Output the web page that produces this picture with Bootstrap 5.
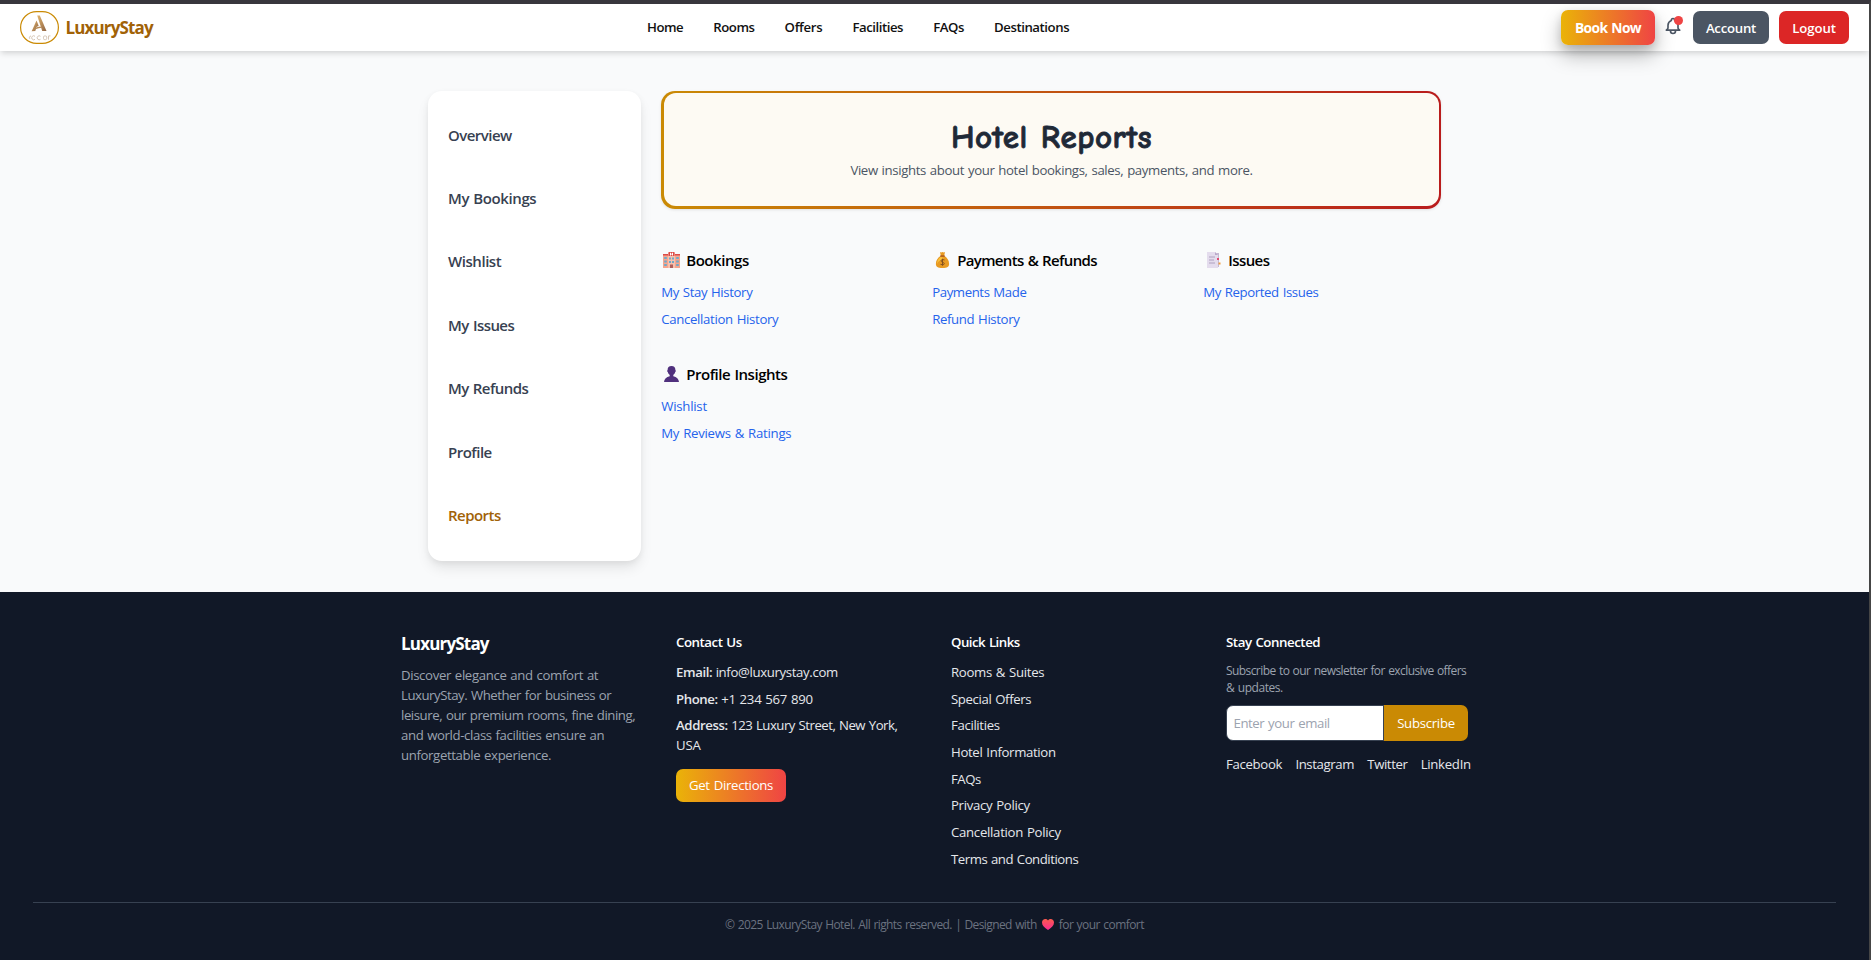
<!DOCTYPE html>
<html lang="en">
<head>
<meta charset="utf-8">
<meta name="viewport" content="width=device-width, initial-scale=1">
<title>LuxuryStay - Hotel Reports</title>
<link rel="stylesheet" href="https://cdn.jsdelivr.net/npm/bootstrap@5.3.0/dist/css/bootstrap.min.css">
<style>
body{font-family:"Segoe UI","Open Sans","Noto Sans",sans-serif;font-size:13.2px;line-height:20px;background:#f9fafb;color:#000;height:960px;overflow:hidden;border-top:4px solid #38363d;border-right:2px solid #454545}
a{text-decoration:none;color:inherit}
[data-w]{white-space:nowrap;word-spacing:.8px}
.topbar{height:47px;background:#fff;box-shadow:0 3px 6px -1px rgba(0,0,0,.17);padding:0 20px;position:relative;z-index:2}
.brandname{font-size:17px;font-weight:700;color:#a16207;margin-left:6.5px}
.menu{font-weight:600;color:#111;position:absolute;left:647px;top:13px}
.menu a{margin-right:30.1px}
.pill{border-radius:7px;font-weight:600;color:#fff;height:33px;display:flex;align-items:center;justify-content:center}
.grad{background:linear-gradient(90deg,#eab308,#ef4444)}
.book{width:94px;height:35px;font-weight:700;box-shadow:0 10px 20px rgba(0,0,0,.28),0 3px 8px rgba(0,0,0,.12);font-size:13.8px}
.bell{width:18px;height:21px;margin:0 10px;position:relative}
.bell svg{position:absolute;left:-2px;top:-1px}
.dot{position:absolute;left:9px;top:-1px;width:9px;height:9px;border-radius:50%;background:#ef4444}
.acct{width:76px;background:#4b5563;margin-right:10px}
.out{width:70px;background:#dc2626}
main{height:541px;padding:40px 0 0 428px;display:flex;gap:20px}
.side{width:213px;height:470px;background:#fff;border-radius:14px;padding:12px 20px;box-shadow:0 8px 14px -2px rgba(0,0,0,.1),0 2px 6px rgba(0,0,0,.05)}
.side a{display:flex;align-items:center;height:63.4px;font-size:15px;font-weight:600;color:#374151}
.side a.on{color:#a16207}
.banner{width:780px;height:118px;border-radius:14px;background:linear-gradient(90deg,#ca8a04,#b91c1c);padding:2px 2px 3px 3px;box-shadow:0 1px 3px rgba(0,0,0,.1)}
.banner>div{height:100%;border-radius:12px;background:#fdfaf3;text-align:center;padding-top:24px}
h1{font-family:"Comic Sans MS","Comic Neue",Lato,sans-serif;font-weight:700;font-size:33px;line-height:40px;margin:0;color:#1f2937;-webkit-text-stroke:.8px #1f2937}
.sub{color:#4b5563;margin-top:3px}
.cards{display:grid;grid-template-columns:repeat(3,238px);column-gap:33px;row-gap:26.4px;margin:39px 0 0 .2px}
.cards h2{font-size:15px;line-height:24px;font-weight:600;margin:0 0 10.100px;display:flex;align-items:center}
.cards h2 svg{width:17px;height:16px;margin:0 6px 0 2px}
ul{list-style:none;margin:0;padding:0}
li{margin-bottom:6.7px}
.cards li{color:#2563eb}
footer{background:#111827;height:368px;padding:40px 33px 0;color:#e5e7eb}
.fcols{display:grid;grid-template-columns:repeat(4,243px);column-gap:32px;width:1067px;margin:0 auto;height:270px}
.fcols h3{font-size:13.3px;line-height:20px;font-weight:600;color:#fff;margin:0 0 10px}
.fcols h3.big{font-size:17px;line-height:24px;font-weight:700;margin:0 0 9px}
.fcols b{font-weight:600}
.mut{color:#9ca3af}
.small-copy{font-size:12px;line-height:17px}
.copy{border-top:1px solid #374151;color:#6b7280;text-align:center;padding-top:13px}
.copy svg{width:12px;height:11px;margin:0 5px;vertical-align:-1px}
.directions{width:110px;margin-top:13.5px;font-weight:400}
.inp{width:158px;height:36px;background:#fff;border:1px solid #374151;border-radius:7px 0 0 7px;color:#9ca3af;padding:7px 6.5px}
.subb{width:84px;height:36px;background:#ca8a04;border-radius:0 7px 7px 0;color:#fff;display:flex;align-items:center;justify-content:center}
.signup{margin:9px 0 13px}
.social{gap:13.2px}
</style>
</head>
<body>
<header class="topbar d-flex align-items-center">
<svg width="39" height="33" viewBox="0 0 39 33">
<defs><linearGradient id="gold" x1="0" x2="1" y1="0" y2="1"><stop offset="0" stop-color="#e2b56c"/><stop offset="1" stop-color="#8f6444"/></linearGradient></defs>
<rect x=".6" y=".6" width="37.8" height="31.8" rx="16" fill="#fff" stroke="#ca8a04" stroke-width="1.2"/>
<path d="M17.2 4.500h2.600L26.500 20h-4.300z" fill="url(#gold)"/><path d="M16.500 9.500l2.200 5.300-2.200 1.300-1.200 3.900-3.600.3z" fill="url(#gold)"/><path d="M11.500 20.300c2-2.800 5-4.500 9-4.800l1 1.300c-4 .3-7 1.600-10 3.500z" fill="#b58a58"/>
<g fill="none" stroke="#d6c6b6" stroke-width="1"><path d="M15 25.300a2 2 0 1 0 0 3M28.500 28.700v-3.800h2M11 25a1.600 1.600 0 0 0-.8 3"/><path d="M20.500 25.300a2 2 0 1 0 0 3"/><rect x="23.500" y="24.900" width="3.200" height="3.800" rx="1.300"/></g>
</svg>
<span class="brandname"><span data-w="87">LuxuryStay</span></span>
<nav class="menu d-flex"><a href="#" data-w="36">Home</a><a href="#" data-w="41">Rooms</a><a href="#" data-w="37.5">Offers</a><a href="#" data-w="50.5">Facilities</a><a href="#" data-w="30.5">FAQs</a><a href="#" data-w="75">Destinations</a></nav>
<div class="ms-auto d-flex align-items-center"><a href="#" class="pill grad book"><span data-w="66">Book Now</span></a><span class="bell"><svg width="20" height="20" viewBox="0 0 24 24" fill="none" stroke="#4b5563" stroke-width="2" stroke-linecap="round" stroke-linejoin="round"><path d="M15 17h5l-1.400-1.400A2 2 0 0 1 18 14.200V11a6 6 0 0 0-4-5.700V5a2 2 0 1 0-4 0v.3C7.700 6.200 6 8.400 6 11v3.200c0 .5-.2 1-.6 1.400L4 17h5m6 0v1a3 3 0 1 1-6 0v-1m6 0H9"/></svg><span class="dot"></span></span><a href="#" class="pill acct"><span data-w="50">Account</span></a><a href="#" class="pill out"><span data-w="43.5">Logout</span></a></div>
</header>
<main>
<aside class="side"><a href="#"><span data-w="63.5">Overview</span></a><a href="#"><span data-w="88">My Bookings</span></a><a href="#"><span data-w="53">Wishlist</span></a><a href="#"><span data-w="66">My Issues</span></a><a href="#"><span data-w="80">My Refunds</span></a><a href="#"><span data-w="43.5">Profile</span></a><a href="#" class="on"><span data-w="52.5">Reports</span></a></aside>
<section><div class="banner"><div><h1><span data-w="201">Hotel Reports</span></h1><div class="sub"><span data-w="402">View insights about your hotel bookings, sales, payments, and more.</span></div></div></div>
<div class="cards">
<div><h2><svg viewBox="0 0 17 16"><path fill="#f5a58f" d="M0 3h17v13H0z"/><path fill="#f8c0ad" d="M5 1h7v15H5z"/><path fill="#dc4b48" d="M0 2h5v1.500H0zM12 2h5v1.500h-5zM5.500 0h6v4h-6z"/><path fill="#fff" d="M7 .8h1v1h1v-1h1v2.600H9v-1H8v1H7z"/><path fill="#6fa9c8" d="M1.200 5h2.600v2H1.200zM1.200 8.500h2.600v2H1.200zM1.200 12h2.600v2H1.200zM6 5.500h2v2H6zM9 5.500h2v2H9zM6 9h2v2H6zM9 9h2v2H9zM13.200 5h2.600v2h-2.600zM13.200 8.500h2.600v2h-2.600zM13.200 12h2.600v2h-2.600z"/><path fill="#b0605c" d="M7 12.500h3V16H7z"/></svg><span data-w="62.5">Bookings</span></h2><ul><li><a href="#" data-w="91">My Stay History</a></li><li><a href="#" data-w="117">Cancellation History</a></li></ul></div>
<div><h2><svg viewBox="0 0 17 16"><path fill="#e89a22" d="M6 0l1.200.6L8.500 0l1.300.6L11 0l-.8 3.800c3 2 5 4.800 4.900 8.200 0 2.800-1.800 4-6.600 4s-6.600-1.200-6.600-4C1.800 8.600 3.800 5.800 6.800 3.800z"/><path fill="#f9c13c" d="M6.800 5C4 7 3 9.500 3 12c1-3 4-4 7-6z"/><path fill="#a24f1d" d="M6.300 3.400h4.400v1.300H6.300z"/><path d="M10.500 8c-3.500-1.500-4.500 1.500-2 2.200 3 .8 2 3.600-2 2.100M8.500 6.700v7" fill="none" stroke="#84501e"/></svg><span data-w="139.5">Payments &amp; Refunds</span></h2><ul><li><a href="#" data-w="94">Payments Made</a></li><li><a href="#" data-w="87">Refund History</a></li></ul></div>
<div><h2><svg viewBox="0 0 17 16"><path fill="#c5b9d2" d="M4 1h10v14H4z"/><path fill="#e4dced" d="M2 0h8l3 3v13H2z"/><path fill="#b9a9c9" d="M10 0l3 3h-3z"/><path d="M4 5h6M4 8h5M4 11h6" stroke="#a99aba" stroke-width=".9"/><path fill="#e04a72" d="M12 6h2v2h-2z"/><path fill="#ee9a3c" d="M13.500 10.500h2v2h-2z"/></svg><span data-w="41">Issues</span></h2><ul><li><a href="#" data-w="115">My Reported Issues</a></li></ul></div>
<div><h2><svg viewBox="0 0 17 16"><path fill="#50307d" d="M8.500 0c2.600 0 3.900 1.600 3.900 4 .6.300.5 1.800-.2 2-.3 1.300-1 2.300-1.900 2.900v1.300c3.300.6 5.500 2.600 5.700 5.800H1c.2-3.200 2.400-5.200 5.700-5.800V8.900C5.800 8.300 5.100 7.300 4.800 6c-.7-.2-.8-1.700-.2-2C4.600 1.600 5.900 0 8.500 0z"/></svg><span data-w="101">Profile Insights</span></h2><ul><li><a href="#" data-w="45.5">Wishlist</a></li><li><a href="#" data-w="130">My Reviews &amp; Ratings</a></li></ul></div>
</div></section>
</main>
<footer>
<div class="fcols">
<div><h3 class="big"><span data-w="87.5">LuxuryStay</span></h3><div class="mut"><span data-w="197">Discover elegance and comfort at</span><br><span data-w="210">LuxuryStay. Whether for business or</span><br><span data-w="234">leisure, our premium rooms, fine dining,</span><br><span data-w="203">and world-class facilities ensure an</span><br><span data-w="150">unforgettable experience.</span></div></div>
<div><h3><span data-w="65.5">Contact Us</span></h3><ul><li><b data-w="36">Email:</b> <span data-w="122">info@luxurystay.com</span></li><li><b data-w="41.5">Phone:</b> <span data-w="91.5">+1 234 567 890</span></li><li><b data-w="51.5">Address:</b> <span data-w="166">123 Luxury Street, New York,</span><br><span data-w="24.5">USA</span></li></ul><a href="#" class="pill grad directions"><span data-w="84">Get Directions</span></a></div>
<div><h3><span data-w="68.5">Quick Links</span></h3><ul><li><a href="#" data-w="93">Rooms &amp; Suites</a></li><li><a href="#" data-w="80">Special Offers</a></li><li><a href="#" data-w="48.5">Facilities</a></li><li><a href="#" data-w="104.5">Hotel Information</a></li><li><a href="#" data-w="29.5">FAQs</a></li><li><a href="#" data-w="78.5">Privacy Policy</a></li><li><a href="#" data-w="109.5">Cancellation Policy</a></li><li><a href="#" data-w="127">Terms and Conditions</a></li></ul></div>
<div><h3><span data-w="94">Stay Connected</span></h3><div class="mut small-copy"><span data-w="240">Subscribe to our newsletter for exclusive offers</span><br><span data-w="56.5">&amp; updates.</span></div><div class="d-flex signup"><div class="inp"><span data-w="96">Enter your email</span></div><div class="subb"><span data-w="57.5">Subscribe</span></div></div><div class="d-flex social"><a href="#" data-w="56">Facebook</a><a href="#" data-w="58.5">Instagram</a><a href="#" data-w="40">Twitter</a><a href="#" data-w="50">LinkedIn</a></div></div>
</div>
<div class="copy small-copy"><span data-w="311.5">© 2025 LuxuryStay Hotel. All rights reserved. | Designed with</span><svg viewBox="0 0 12 11"><defs><linearGradient id="love" x1="0" x2="0" y1="0" y2="1"><stop offset="0" stop-color="#fa5a4e"/><stop offset="1" stop-color="#f92b90"/></linearGradient></defs><path fill="url(#love)" d="M6 11C2.500 8.500 0 6.500 0 3.400 0 .2 4-1.300 6 1.600 8-1.300 12 .2 12 3.400 12 6.500 9.500 8.500 6 11z"/></svg><span data-w="85">for your comfort</span></div>
</footer>
<script>
// Tracks every label so that it occupies its design width (data-w, px).
document.querySelectorAll('[data-w]').forEach(function (el) {
  var range = document.createRange();
  range.selectNodeContents(el);
  var gap = +el.dataset.w + 0.2 - range.getBoundingClientRect().width;
  el.style.letterSpacing = (gap / el.textContent.length).toFixed(3) + 'px';
});
</script>
<script src="https://cdn.jsdelivr.net/npm/bootstrap@5.3.0/dist/js/bootstrap.bundle.min.js"></script>
</body>
</html>
